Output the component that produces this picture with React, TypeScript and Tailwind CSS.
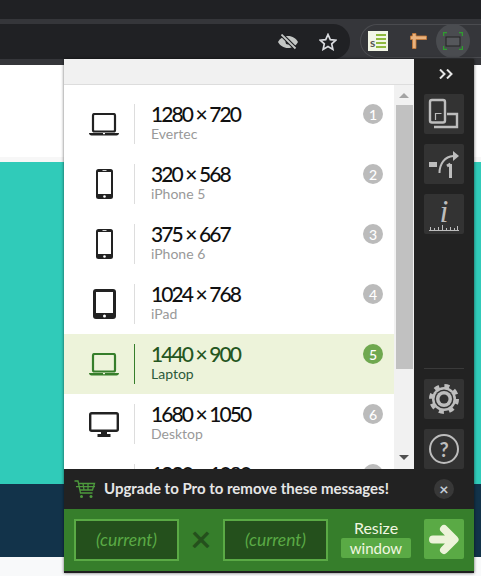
const lato = "font-['Lato',sans-serif]";

type Device = "laptop" | "phone" | "tablet" | "desktop";

const rows: { size: string; name: string; device: Device; n: number; active?: boolean }[] = [
  { size: "1280 × 720", name: "Evertec", device: "laptop", n: 1 },
  { size: "320 × 568", name: "iPhone 5", device: "phone", n: 2 },
  { size: "375 × 667", name: "iPhone 6", device: "phone", n: 3 },
  { size: "1024 × 768", name: "iPad", device: "tablet", n: 4 },
  { size: "1440 × 900", name: "Laptop", device: "laptop", n: 5, active: true },
  { size: "1680 × 1050", name: "Desktop", device: "desktop", n: 6 },
  { size: "1920 × 1080", name: "Full HD", device: "desktop", n: 7 },
];

function DeviceIcon({ device, color, bg }: { device: Device; color: string; bg: string }) {
  if (device === "laptop") {
    return (
      <svg width="30" height="23" viewBox="0 0 30 23" fill="none">
        <rect x="4" y="1" width="22" height="17.500" rx="1.500" stroke={color} strokeWidth="2.200" />
        <path d="M0 20h30c0 1.500-1 2.500-2.500 2.500h-25C1 22.500 0 21.500 0 20z" fill={color} />
        <rect x="14" y="20" width="2" height="1.200" fill={bg} />
      </svg>
    );
  }
  if (device === "phone") {
    return (
      <svg width="17" height="30" viewBox="0 0 17 30" fill="none">
        <rect width="17" height="30" rx="2.500" fill={color} />
        <rect x="2" y="3" width="13" height="22" fill={bg} />
        <circle cx="8.500" cy="27.500" r="1.300" fill={bg} />
        <rect x="6.500" y="1.200" width="4" height="0.800" fill={bg} />
      </svg>
    );
  }
  if (device === "tablet") {
    return (
      <svg width="23" height="30" viewBox="0 0 23 30" fill="none">
        <rect width="23" height="30" rx="3" fill={color} />
        <rect x="3" y="3" width="17" height="21" fill={bg} />
        <circle cx="11.500" cy="27" r="1.500" fill={bg} />
      </svg>
    );
  }
  return (
    <svg width="30" height="25" viewBox="0 0 30 25" fill="none">
      <rect x="1.200" y="1.200" width="27.600" height="17.600" rx="1.500" stroke={color} strokeWidth="2.400" />
      <path d="M12 20h6v2h3.500v3h-13v-3H12z" fill={color} />
    </svg>
  );
}

function Row({ size, name, device, n, active }: (typeof rows)[number]) {
  return (
    <div className={`flex h-[60px] shrink-0 items-center ${active ? "bg-[#edf3da]" : "bg-white"}`}>
      <div className="flex w-[70px] shrink-0 justify-center pl-[10px]">
        <DeviceIcon device={device} color={active ? "#367e2b" : "#222222"} bg={active ? "#edf3da" : "#ffffff"} />
      </div>
      <div className={`h-[40px] w-px shrink-0 ${active ? "bg-[#367e2b]" : "bg-[#dddddd]"}`} />
      <div className="ml-4 min-w-0 flex-1 pb-[4px]">
        <div className={`text-[21px] leading-[23px] font-medium tracking-[-1.9px] whitespace-nowrap ${active ? "text-[#25561f]" : "text-[#111111]"}`}>{size}</div>
        <div className={`text-[14px] leading-[17px] ${active ? "text-[#2b5a3a]" : "text-[#999999]"}`}>{name}</div>
      </div>
      <div className={`mr-[11px] -mt-[20px] flex h-5 w-5 shrink-0 items-center justify-center rounded-full text-[14px] font-medium text-white ${active ? "bg-[#6fa84f]" : "bg-[#bbbbbb]"}`}>
        {n}
      </div>
    </div>
  );
}

function ToolButton({ children }: { children: React.ReactNode }) {
  return <div className="flex h-10 w-10 items-center justify-center rounded-[2px] bg-[#333333]">{children}</div>;
}

export default function App() {
  return (
    <div className={`relative h-[576px] w-[481px] overflow-hidden bg-[#f8f9fa] ${lato}`}>
      <div className="h-[19px] bg-[#202124]" />
      <div className="flex h-[46px] items-start bg-[#35363a] pt-[5px]">
        <div className="flex h-[35px] w-[350px] shrink-0 items-center justify-end rounded-r-[17px] bg-[#202124] pr-[13px]">
          <svg width="20" height="16" viewBox="0 0 20 16" className="mr-[21px]" fill="#c4c7c5">
            <path d="M10 2C5.500 2 2 4.500 0 8c2 3.500 5.500 6 10 6s8-2.500 10-6c-2-3.500-5.500-6-10-6z" />
            <circle cx="10" cy="8" r="2.500" fill="#202124" />
            <path d="M3 0l15 15" stroke="#202124" strokeWidth="4" />
            <path d="M3.500 0.500l14 14" stroke="#c4c7c5" strokeWidth="1.800" />
          </svg>
          <svg width="18" height="18" viewBox="0 0 18 18" fill="none" stroke="#dadce0" strokeWidth="1.700">
            <path d="M9 1.500l2.300 5.100 5.500.6-4.100 3.700 1.200 5.500L9 13.600l-4.900 2.800 1.200-5.500-4.100-3.700 5.500-.6z" />
          </svg>
        </div>
        <div className="ml-[10px] flex h-[34px] flex-1 items-center rounded-l-[17px] border border-r-0 border-[#4a4b4f] pl-[7px]">
          <div className="flex h-5 w-5 shrink-0 items-end gap-[1px] bg-[#f2f6e6] px-[2px] pb-[2px]">
            <span className="text-[12px] leading-[12px] font-bold text-[#555555]">s</span>
            <div className="mb-[1px] flex flex-1 flex-col gap-[2px]">
              <div className="h-[2px] bg-[#8fb93e]" />
              <div className="h-[2px] bg-[#8fb93e]" />
              <div className="h-[2px] bg-[#8fb93e]" />
              <div className="h-[2px] bg-[#8fb93e]" />
            </div>
          </div>
          <svg width="17" height="16" viewBox="0 0 17 16" className="ml-[22px] shrink-0">
            <path d="M2.500 0.500h3.500v2.500h10.500v3.500H6v9H2.500v-9H0.500V3h2z" fill="#e8b27e" stroke="#c97a36" strokeWidth="0.800" />
          </svg>
          <div className="relative ml-[9px] flex h-[34px] w-[34px] shrink-0 items-center justify-center rounded-full bg-[#4a4c50]">
            <svg width="20" height="18" viewBox="0 0 20 18" fill="none">
              <path d="M0.500 4V0.500H4M16 0.500h3.500V4M19.500 14v3.500H16M4 17.500H0.500V14" stroke="#2f9e2f" strokeWidth="1.500" />
              <rect x="3" y="5" width="14" height="9" fill="#55575b" stroke="#222222" />
            </svg>
          </div>
        </div>
      </div>
      <div className="h-[92px] bg-white" />
      <div className="h-[5px] bg-[#f7f7f7]" />
      <div className="h-[322px] bg-[#30cbb9]" />
      <div className="h-[73px] bg-[#12334a]" />

      <div className="absolute left-[64px] top-[59px] flex h-[514px] w-[410px] flex-col shadow-[0_0_3px_rgba(0,0,0,0.6)]">
        <div className="flex min-h-0 flex-1">
          <div className="flex w-[350px] flex-col bg-white">
            <div className="h-[26px] shrink-0 border-b border-[#dddddd] bg-[#f1f1f1]" />
            <div className="flex min-h-0 flex-1">
              <div className="min-w-0 flex-1 overflow-hidden pt-[9px]">
                {rows.map((r) => (
                  <Row key={r.n} {...r} />
                ))}
              </div>
              <div className="flex w-5 shrink-0 flex-col items-center bg-[#f1f1f1] pt-[8px]">
                <div className="h-0 w-0 border-x-[5px] border-b-[5px] border-x-transparent border-b-[#a3a3a3]" />
                <div className="mt-[7px] h-[264px] w-[17px] bg-[#c1c1c1]" />
                <div className="mt-[86px] h-0 w-0 border-x-[5px] border-t-[5px] border-x-transparent border-t-[#505050]" />
              </div>
            </div>
          </div>
          <div className="flex flex-1 flex-col items-center bg-[#222222] pt-[10px]">
            <svg width="14" height="10" viewBox="0 0 14 10" className="ml-[4px]" fill="none" stroke="#e6e6e6" strokeWidth="2">
              <path d="M1 0.500l4.500 4.500L1 9.500M8 0.500l4.500 4.500L8 9.500" />
            </svg>
            <div className="mt-[15px] flex flex-col gap-[10px]">
              <ToolButton>
                <svg width="40" height="40" viewBox="0 0 40 40" fill="none" stroke="#bdbdbd">
                  <rect x="6" y="6" width="15" height="22.500" rx="2" strokeWidth="2.400" />
                  <path d="M11.500 26v-6.500h6" strokeWidth="1.200" />
                  <path d="M23 20h10v13H10" strokeWidth="2.400" />
                </svg>
              </ToolButton>
              <ToolButton>
                <svg width="40" height="40" viewBox="0 0 40 40" fill="none">
                  <rect x="5" y="18" width="8" height="5" fill="#bdbdbd" />
                  <path d="M15.500 29c0-9 5-16.500 14-17" stroke="#bdbdbd" strokeWidth="2" />
                  <path d="M29 7l6 5-6 5z" fill="#bdbdbd" />
                  <path d="M26.500 34V20M26.500 20l-3.500 2" stroke="#bdbdbd" strokeWidth="3" />
                </svg>
              </ToolButton>
              <ToolButton>
                <div className="flex flex-col items-center">
                  <span className="font-['Liberation_Serif',serif] text-[32px] leading-[26px] text-[#bdbdbd] italic">i</span>
                  <svg width="30" height="7" viewBox="0 0 30 7" fill="none" stroke="#bdbdbd">
                    <path d="M0 6.500h30M1.500 6V3M5.500 6V4M9.500 6V3M13.500 6V1M17.500 6V4M21.500 6V3M25.500 6V4M28.500 6V2" />
                  </svg>
                </div>
              </ToolButton>
            </div>
            <div className="mt-auto flex flex-col items-center">
              <div className="mb-[10px] h-px w-10 bg-[#3a3a3a]" />
              <ToolButton>
                <svg width="32" height="32" viewBox="0 0 32 32" fill="none">
                  <circle cx="16" cy="16" r="13" stroke="#bdbdbd" strokeWidth="4" strokeDasharray="5 5.210" />
                  <circle cx="16" cy="16" r="12" fill="#bdbdbd" />
                  <circle cx="16" cy="16" r="9.500" fill="#333333" />
                  <circle cx="16" cy="16" r="8" fill="#bdbdbd" />
                  <circle cx="16" cy="16" r="4.500" fill="#333333" />
                </svg>
              </ToolButton>
              <div className="mt-[10px]">
                <ToolButton>
                  <div className="flex h-[30px] w-[30px] items-center justify-center rounded-full border-2 border-[#bdbdbd] text-[20px] leading-none font-bold text-[#bdbdbd]">?</div>
                </ToolButton>
              </div>
            </div>
          </div>
        </div>
        <div className="flex h-[40px] shrink-0 items-center bg-[#222222] pl-[10px] pr-[20px]">
          <svg width="22" height="19" viewBox="0 0 22 19" fill="none" stroke="#4d9a3d" strokeWidth="1.300">
            <path d="M0.500 1h3.500l2.500 12h12M4.500 3.500h16l-2 6.500H6M9 3.500l1 6.500M14 3.500v6.500M2 6.700h19" />
            <circle cx="7.500" cy="16.500" r="1.500" fill="#4d9a3d" stroke="none" />
            <circle cx="17" cy="16.500" r="1.500" fill="#4d9a3d" stroke="none" />
          </svg>
          <div className="ml-[8px] flex-1 pb-[2px] text-[15px] font-bold whitespace-nowrap text-[#e6e6e6]">Upgrade to Pro to remove these messages!</div>
          <div className="flex h-5 w-5 shrink-0 items-center justify-center rounded-full bg-[#383838] text-[16px] leading-none font-bold text-[#c3ccd6]">×</div>
        </div>
        <div className="flex h-[64px] shrink-0 items-start border-b-2 border-[#1f1f1f] bg-[#367e2b] px-[10px] pt-[10px]">
          <div className="flex h-[42px] w-[105px] items-center justify-center border-2 border-[#5aaa45] bg-[#24501c] text-[17.500px] text-[#5aaa45] italic">(current)</div>
          <div className="flex h-[42px] w-[44px] items-center justify-center pb-[4px] text-[36px] leading-none font-bold text-[#24501c]">×</div>
          <div className="flex h-[42px] w-[105px] items-center justify-center border-2 border-[#5aaa45] bg-[#24501c] text-[17.500px] text-[#5aaa45] italic">(current)</div>
          <div className="ml-[13px] -mt-[2px] flex w-[70px] flex-col items-center">
            <div className="text-[16px] leading-[21px] text-[#f1f6e0]">Resize</div>
            <div className="flex h-5 w-[70px] items-center justify-center rounded-[2px] bg-[#5aaa45] text-[15px] text-[#f1f6e0]">window</div>
          </div>
          <div className="ml-[13px] flex h-10 w-10 items-center justify-center rounded-[2px] bg-[#5aaa45]">
            <svg width="30" height="31" viewBox="0 0 30 31" fill="none" stroke="#edf3da" strokeWidth="8" strokeLinecap="round" strokeLinejoin="round">
              <path d="M4 15.500h20M15 5l10.500 10.500L15 26" />
            </svg>
          </div>
        </div>
      </div>
    </div>
  );
}
